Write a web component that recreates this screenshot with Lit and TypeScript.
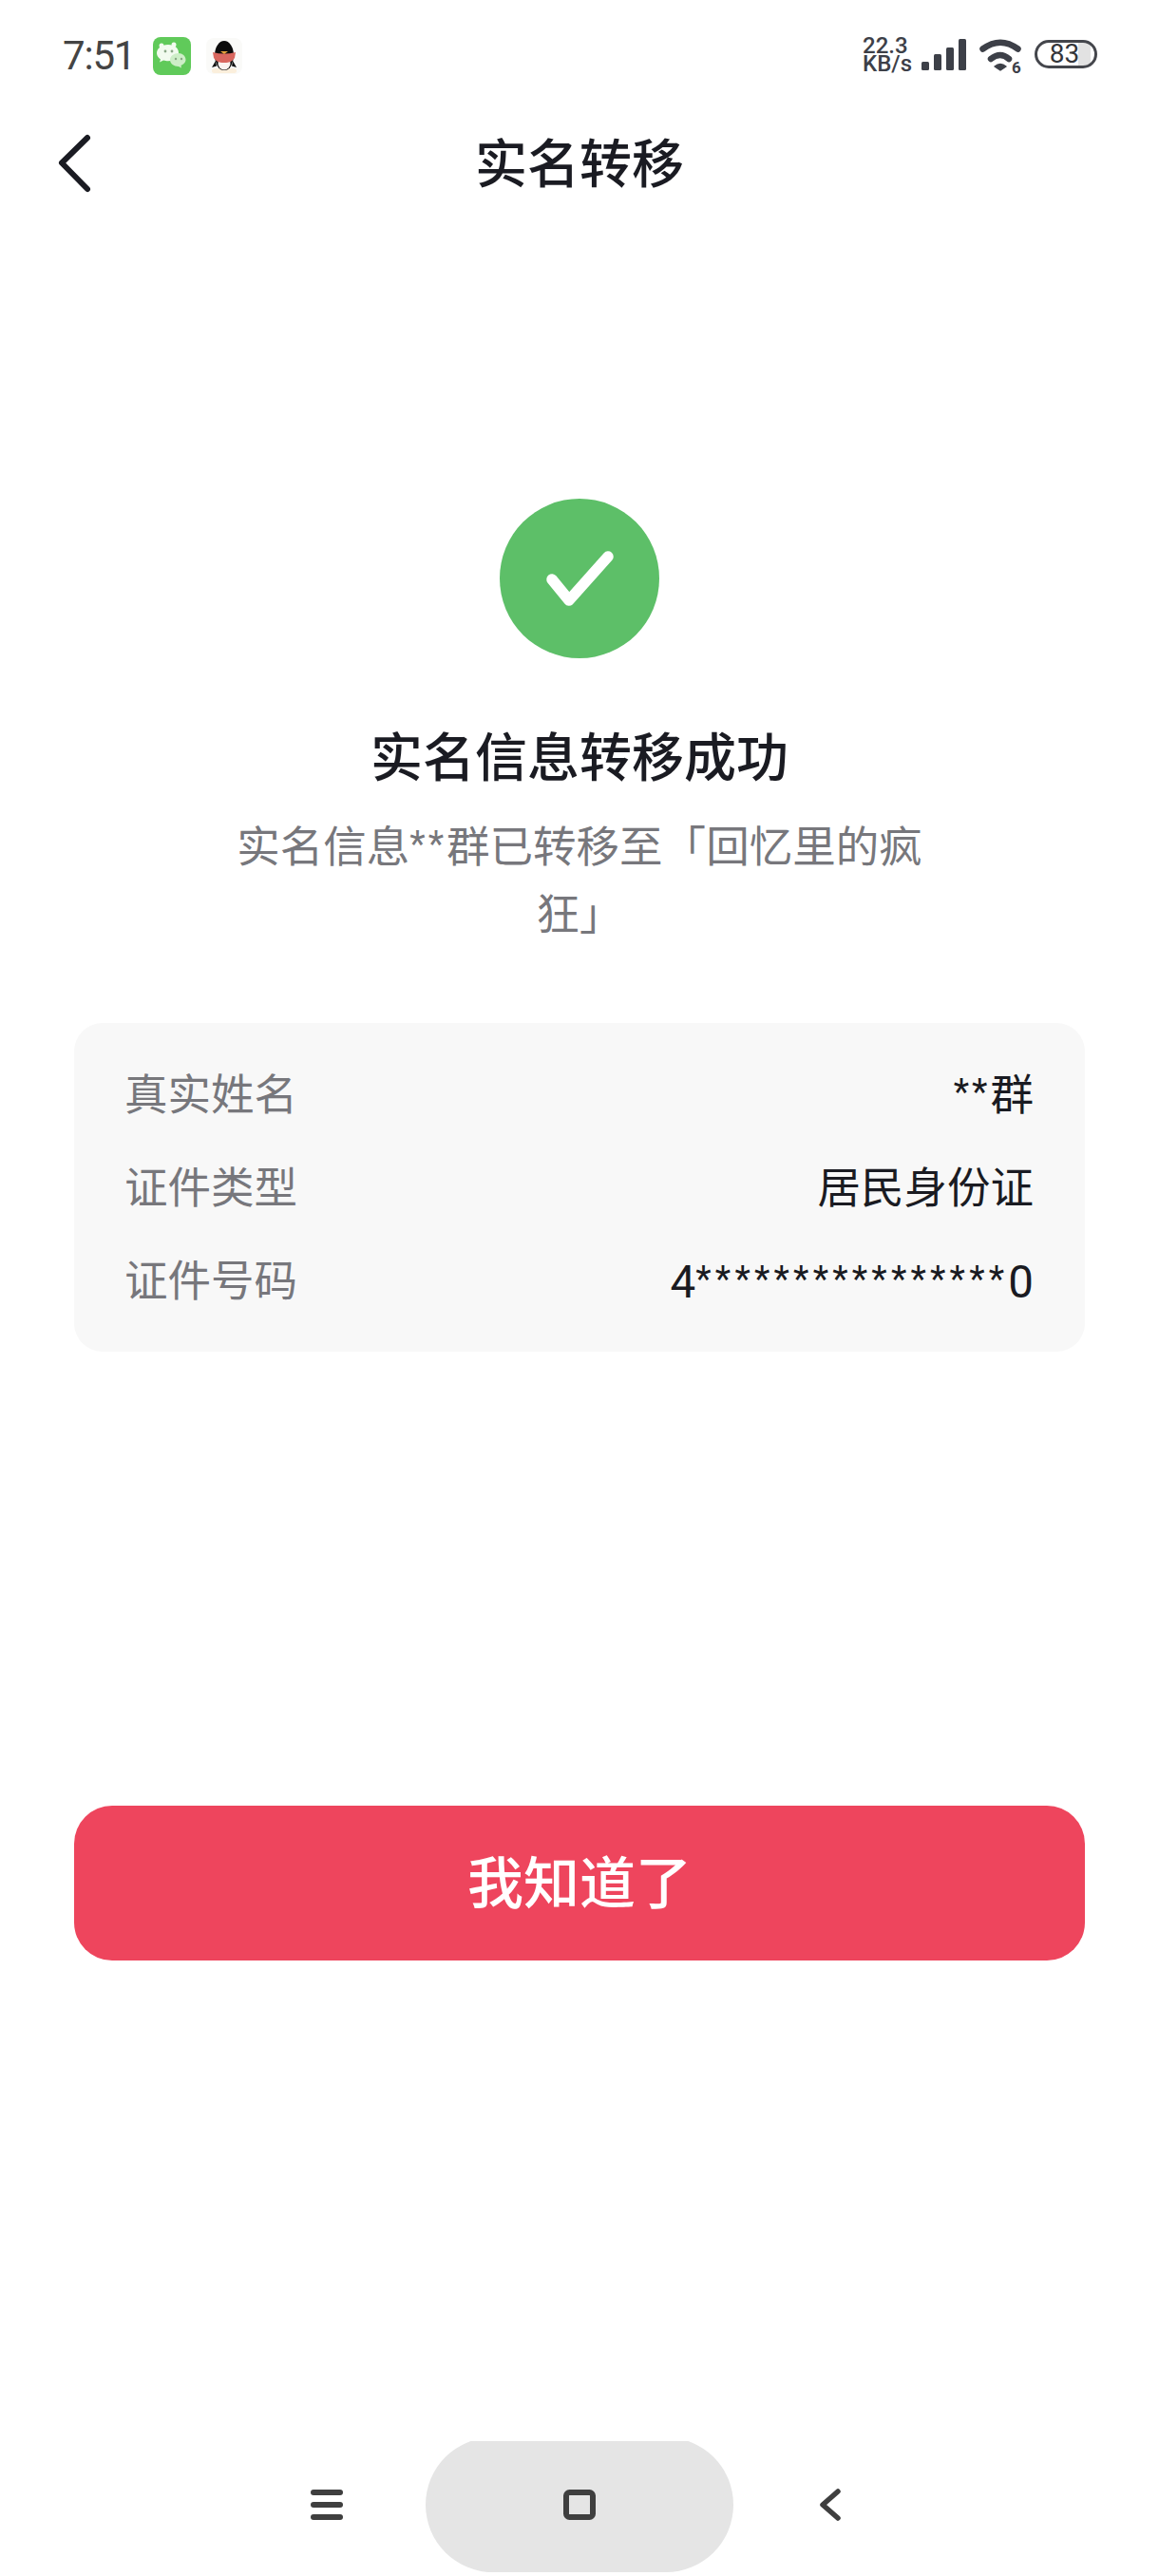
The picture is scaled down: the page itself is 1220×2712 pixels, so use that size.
import { LitElement, html, css } from "lit";
import { customElement } from "lit/decorators.js";

@customElement("app-root")
export class AppRoot extends LitElement {
  static styles = css`
    :host {
      display: block;
      width: 1220px;
      height: 2712px;
      background: #fff;
      font-family: Roboto, "Noto Sans CJK SC", "Noto Sans", sans-serif;
      color: #1a1b22;
      overflow: hidden;
    }
    .page { display: flex; flex-direction: column; height: 2712px; }

    .status {
      height: 116px;
      box-sizing: border-box;
      padding: 38px 65px 0 66px;
      display: flex;
      align-items: flex-start;
      flex: none;
    }
    .clock {
      font-size: 42px;
      line-height: 42px;
      color: #444;
      width: 95px;
      letter-spacing: -1.2px;
    }
    .app-wechat { width: 40px; height: 40px; display: block; margin-top: 1px; }
    .app-qq { width: 38px; height: 38px; display: block; margin: 2px 0 0 16px; }
    .spacer { flex: 1; }
    .speed {
      font-weight: 500;
      font-size: 24px;
      line-height: 19px;
      color: #3d4048;
      margin-top: 1px;
      width: 62px;
      white-space: nowrap;
    }
    .sig { width: 48px; height: 34px; display: block; margin-top: 3px; }
    .wifi { width: 46px; height: 44px; display: block; margin: 3px 0 0 13px; }
    .battery {
      width: 66px;
      height: 30px;
      box-sizing: border-box;
      margin: 4px 0 0 12px;
      padding-right: 3px;
      border: 3px solid #44464c;
      border-radius: 15px;
      overflow: hidden;
      font-size: 28px;
      line-height: 24px;
      color: #33353a;
      text-align: center;
      background: linear-gradient(to right, #fff 72%, #e2e2e2 72%, #e2e2e2 93%, #fff 93%);
    }

    .header {
      flex: none;
      height: 110px;
      display: flex;
      align-items: center;
      padding-left: 60px;
      position: relative;
    }
    .back { width: 38px; height: 66px; display: block; }
    .title {
      position: absolute;
      left: 0;
      right: 0;
      top: 22px;
      text-align: center;
      font-size: 55px;
      line-height: 70px;
      font-weight: 500;
    }

    .content {
      flex: none;
      box-sizing: border-box;
      padding: 0 78px 0 78px;
      display: flex;
      flex-direction: column;
      align-items: stretch;
    }
    .check { width: 168px; height: 168px; display: block; margin: 299px auto 0; }
    h1 {
      margin: 67px 0 0;
      text-align: center;
      font-size: 55px;
      line-height: 76px;
      font-weight: 500;
      color: #1a1b22;
    }
    .sub {
      margin: 19px auto 0;
      width: 740px;
      text-align: center;
      font-size: 45.500px;
      line-height: 67px;
      color: #77777c;
    }
    .bracket { font-family: "Noto Sans CJK TC", sans-serif; }
    .ast {
      font-size: 38px;
      line-height: 1;
      letter-spacing: 3px;
      vertical-align: 6px;
    }
    .card {
      margin-top: 80px;
      height: 346px;
      box-sizing: border-box;
      background: #f8f8f8;
      border-radius: 30px;
      padding: 28px 54px 0 53px;
      display: flex;
      flex-direction: column;
    }
    .row {
      display: flex;
      justify-content: space-between;
      align-items: center;
      height: 98px;
      font-size: 45.500px;
      line-height: 98px;
    }
    .label { color: #77777c; }
    .value { color: #1a1b22; }
    .num { font-size: 47.500px; }
    .num .ast { letter-spacing: 4.200px; }
    .btn {
      margin-top: 478px;
      height: 163px;
      box-sizing: border-box;
      padding-bottom: 8px;
      border-radius: 40px;
      background: #ee455d;
      color: #fff;
      font-size: 59px;
      font-weight: 500;
      display: flex;
      align-items: center;
      justify-content: center;
    }

    .nav {
      margin-top: auto;
      flex: none;
      height: 138px;
      margin-bottom: 4px;
      display: flex;
      align-items: center;
      overflow: hidden;
    }
    .ham { width: 34px; height: 32px; display: block; margin-left: 327px; margin-top: -4px; }
    .pill {
      width: 324px;
      height: 142px;
      margin: -4px 0 0 87px;
      flex: none;
      border-radius: 71px;
      background: #e5e5e5;
      display: flex;
      align-items: center;
      justify-content: center;
    }
    .home { width: 34px; height: 32px; display: block; }
    .nav-back { width: 24px; height: 34px; display: block; margin: -4px 0 0 90px; }
  `;

  render() {
    return html`
      <div class="page">
        <div class="status">
          <div class="clock">7:51</div>
          <svg class="app-wechat" viewBox="0 0 40 40">
            <rect width="40" height="40" rx="8" fill="#60ca5a" />
            <path d="M16 8c-7 0-12 4-12 9 0 3 2 5 4 6.500l-1 3 4-2c2 .5 3 .7 5 .7 7 0 11-4 11-8.700S23 8 16 8z" fill="#f2fbef" />
            <circle cx="9" cy="9" r="2.500" fill="#f2fbef" />
            <circle cx="22" cy="8" r="2.500" fill="#f2fbef" />
            <path d="M27 17c-5 0-9 3-9 7s4 7 9 7l3 1.500-.5-2.500c2-1 5-3 5-6 0-4-3.500-7-7.500-7z" fill="#cdeec7" />
            <circle cx="13" cy="15" r="1.400" fill="#8aa886" />
            <circle cx="20" cy="15" r="1.400" fill="#8aa886" />
            <circle cx="24" cy="23" r="1.200" fill="#8aa886" />
            <circle cx="30" cy="23" r="1.200" fill="#8aa886" />
          </svg>
          <svg class="app-qq" viewBox="0 0 38 38">
            <rect width="38" height="38" rx="8" fill="#fafaf8" />
            <rect x="6" y="32" width="26" height="5" rx="2.500" fill="#fbefdc" />
            <ellipse cx="19" cy="18" rx="10" ry="15" fill="#0c0c0c" />
            <ellipse cx="19" cy="26" rx="8" ry="8" fill="#0c0c0c" />
            <ellipse cx="19" cy="27" rx="6.500" ry="6.500" fill="#fbf3f0" />
            <path d="M7 15c8 2 16 2 24 0l-1 6c-2 3-5 5-11 5s-9-2-11-5z" fill="#d9675f" />
            <path d="M15 14h8l-4 3z" fill="#e8a23c" />
            <path d="M10 24l-4 7 5-1.500zM28 24l4 7-5-1.500z" fill="#111" />
          </svg>
          <div class="spacer"></div>
          <div class="speed">22.3<br />KB/s</div>
          <svg class="sig" viewBox="0 0 48 34">
            <g fill="#3d4048">
              <rect x="0" y="24" width="8" height="9" rx="1.500" />
              <rect x="13" y="16" width="8" height="17" rx="1.500" />
              <rect x="26" y="9" width="8" height="24" rx="1.500" />
              <rect x="39" y="0" width="8" height="33" rx="1.500" />
            </g>
          </svg>
          <svg class="wifi" viewBox="0 0 46 44">
            <g fill="none" stroke="#3d4048" stroke-linecap="round" stroke-width="6.500">
              <path d="M3.500 10.500Q22 -3 40.500 10.500" />
              <path d="M12 21Q22 13 31 21" />
            </g>
            <path d="M16 29Q22 24 28 29L22 33z" fill="#3d4048" stroke="#3d4048" stroke-width="1.500" stroke-linejoin="round" />
            <text x="34" y="36" font-family="Roboto, sans-serif" font-weight="700" font-size="17" fill="#3d4048">6</text>
          </svg>
          <div class="battery">83</div>
        </div>

        <div class="header">
          <svg class="back" viewBox="0 0 38 66">
            <path d="M32 7 5 33.500 32 61" fill="none" stroke="#1a1b22" stroke-width="6" stroke-linecap="round" stroke-linejoin="round" />
          </svg>
          <div class="title">实名转移</div>
        </div>

        <div class="content">
          <svg class="check" viewBox="0 0 168 168">
            <circle cx="84" cy="84" r="84" fill="#5dbf68" />
            <path d="M55 85 73 107 114 61" fill="none" stroke="#fff" stroke-width="11.500" stroke-linecap="round" stroke-linejoin="round" />
          </svg>
          <h1>实名信息转移成功</h1>
          <div class="sub">实名信息<span class="ast">**</span>群已转移至<span class="bracket">「</span>回忆里的疯狂<span class="bracket">」</span></div>
          <div class="card">
            <div class="row"><span class="label">真实姓名</span><span class="value"><span class="ast">**</span>群</span></div>
            <div class="row"><span class="label">证件类型</span><span class="value">居民身份证</span></div>
            <div class="row"><span class="label">证件号码</span><span class="value num">4<span class="ast">****************</span>0</span></div>
          </div>
          <div class="btn">我知道了</div>
        </div>

        <div class="nav">
          <svg class="ham" viewBox="0 0 34 32">
            <g fill="#3f3f3f">
              <rect x="0" y="0" width="34" height="6" rx="3" />
              <rect x="0" y="13" width="34" height="6" rx="3" />
              <rect x="0" y="26" width="34" height="6" rx="3" />
            </g>
          </svg>
          <div class="pill">
            <svg class="home" viewBox="0 0 34 32">
              <rect x="3" y="3" width="28" height="26" rx="3.500" fill="none" stroke="#3f3f3f" stroke-width="6" />
            </svg>
          </div>
          <svg class="nav-back" viewBox="0 0 24 34">
            <path d="M20 3 4 17l16 14" fill="none" stroke="#3f3f3f" stroke-width="5.500" stroke-linecap="round" stroke-linejoin="round" />
          </svg>
        </div>
      </div>
    `;
  }
}
